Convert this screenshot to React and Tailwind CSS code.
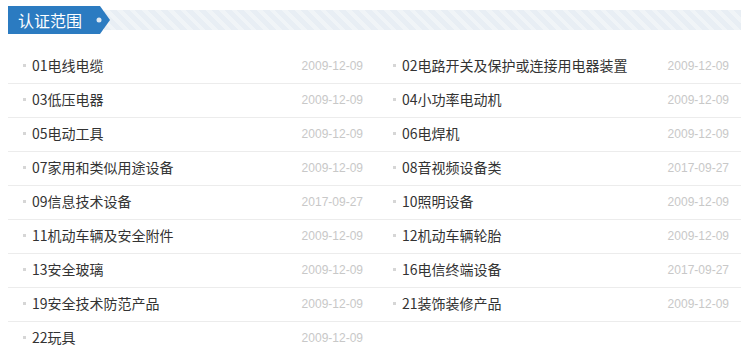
import React from 'react';

const items = [
    ['01电线电缆', '2009-12-09'],
    ['02电路开关及保护或连接用电器装置', '2009-12-09'],
    ['03低压电器', '2009-12-09'],
    ['04小功率电动机', '2009-12-09'],
    ['05电动工具', '2009-12-09'],
    ['06电焊机', '2009-12-09'],
    ['07家用和类似用途设备', '2009-12-09'],
    ['08音视频设备类', '2017-09-27'],
    ['09信息技术设备', '2017-09-27'],
    ['10照明设备', '2009-12-09'],
    ['11机动车辆及安全附件', '2009-12-09'],
    ['12机动车辆轮胎', '2009-12-09'],
    ['13安全玻璃', '2009-12-09'],
    ['16电信终端设备', '2017-09-27'],
    ['19安全技术防范产品', '2009-12-09'],
    ['21装饰装修产品', '2009-12-09'],
    ['22玩具', '2009-12-09'],
];

const App = () => {
    return (
        <div className="w-[741px] h-[352px] bg-white overflow-hidden font-['Noto_Sans_CJK_SC',sans-serif]">
            {/* 标题栏 */}
            <div className="flex items-center pt-[6px] pl-[8px]">
                <div className="w-[84px] h-[28px] bg-[#2b7bc1] text-white text-[16px] leading-[28px] pl-[10px] shrink-0">
                    认证范围
                </div>
                <svg width="18" height="28" viewBox="0 0 18 28" className="shrink-0 relative z-10">
                    <polygon points="0,0 8,0 18,14 8,28 0,28" fill="#2b7bc1" />
                    <circle cx="7" cy="14" r="2.5" fill="#dde7f1" />
                </svg>
                <div className="flex-1 h-[20px] -ml-[6px] bg-[repeating-linear-gradient(45deg,#e8eef4_0px,#e8eef4_5px,#f0f4f7_5px,#f0f4f7_9px)]" />
            </div>

            {/* 列表 */}
            <ul className="grid grid-cols-[371px_1fr] pl-[8px] mt-[16px]">
                {items.map(([name, date], i) => (
                    <li
                        key={name}
                        className={`flex items-center h-[34px] pb-[2px] border-b border-[#ececec] ${i % 2 === 0 ? 'pl-[15px] pr-[16px]' : 'pl-[14px] pr-[12px]'}`}
                    >
                        <span className="w-[3px] h-[3px] bg-[#d6d6d6] mr-[6px] shrink-0" />
                        <span className="flex-1 text-[14px] text-[#333] truncate">{name}</span>
                        <span className="text-[12px] text-[#c8c8c8] font-['Liberation_Sans',sans-serif]">{date}</span>
                    </li>
                ))}
            </ul>
        </div>
    );
};

export default App;
